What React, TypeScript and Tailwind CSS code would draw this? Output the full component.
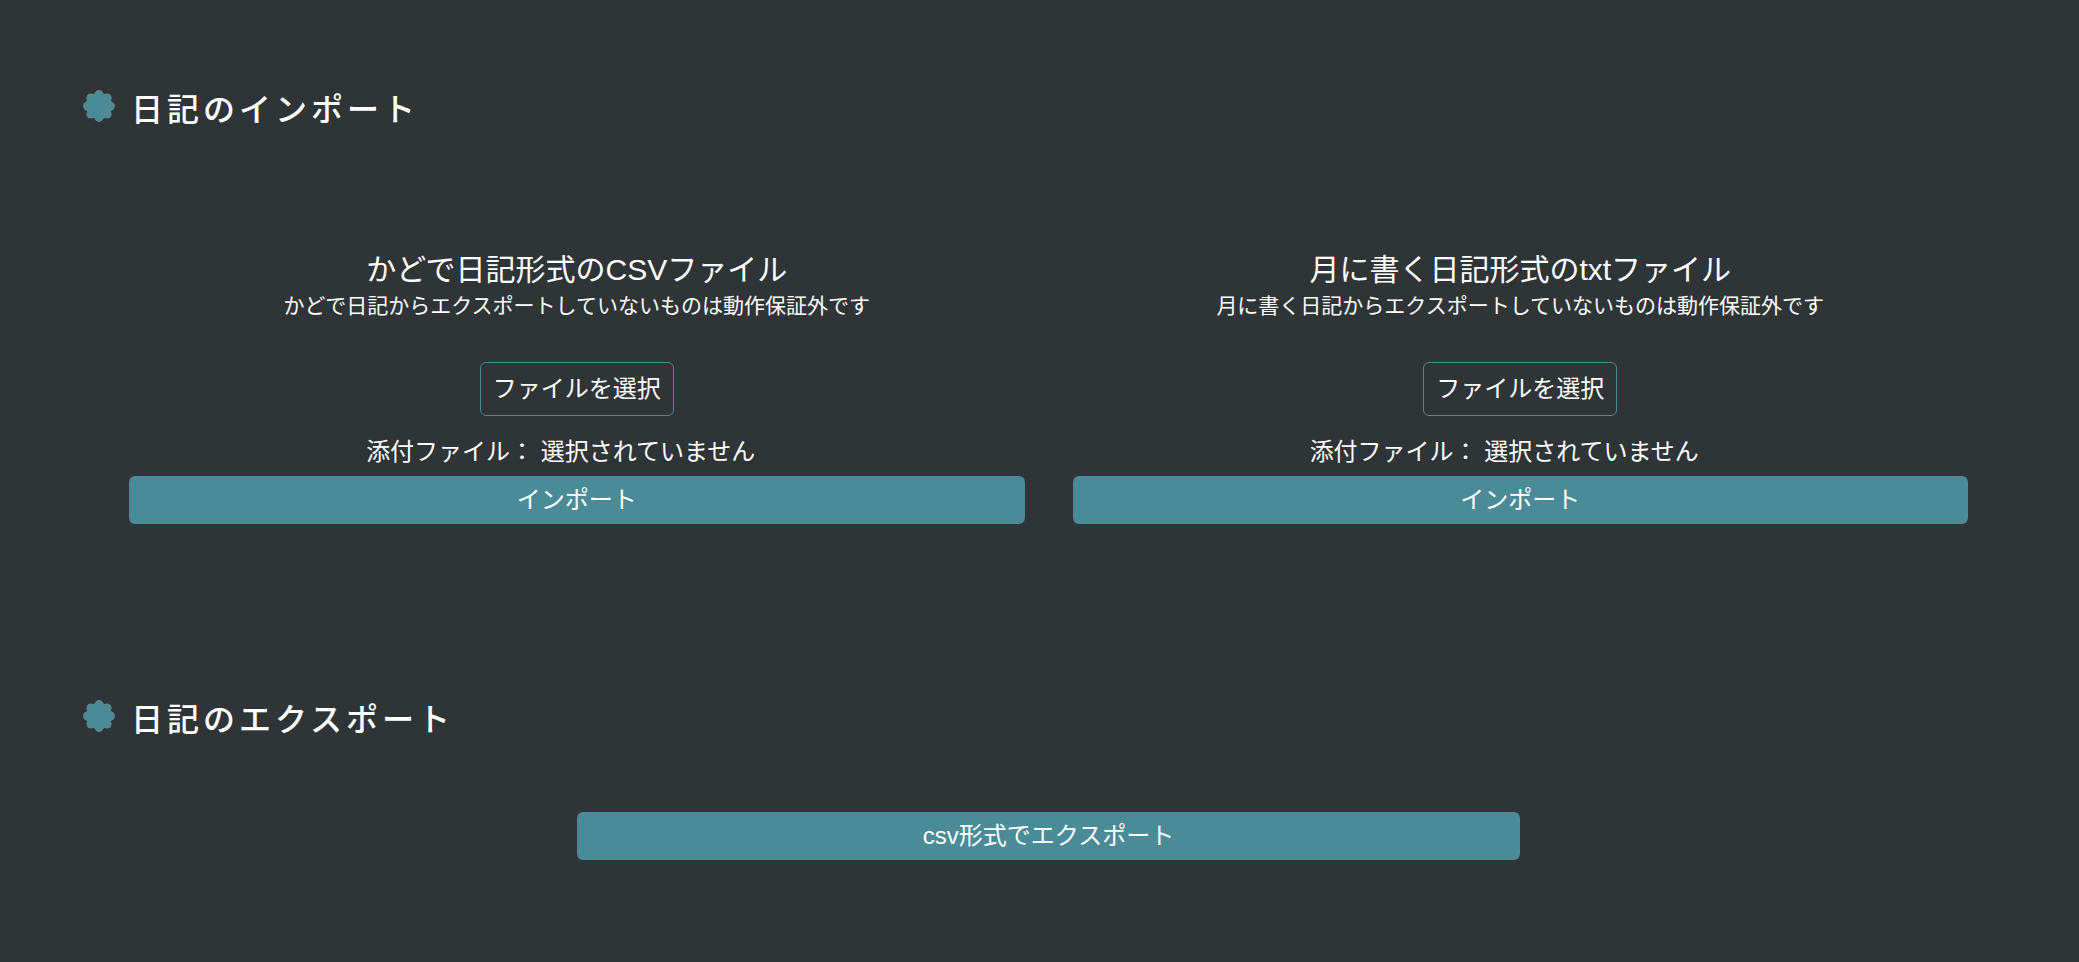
import React from "react";

const petals = [
  [16, 4.6],
  [24.1, 7.9],
  [27.4, 16],
  [24.1, 24.1],
  [16, 27.4],
  [7.9, 24.1],
  [4.6, 16],
  [7.9, 7.9],
];

function Badge() {
  return (
    <svg viewBox="0 0 32 32" className="size-8 shrink-0" aria-hidden="true">
      <g fill="#6d8580">
        {petals.map(([cx, cy]) => (
          <circle key={`${cx}-${cy}`} cx={cx} cy={cy} r="4.5" />
        ))}
        <circle cx="16" cy="16" r="13.2" />
      </g>
      <g fill="#4b8b98">
        {petals.map(([cx, cy]) => (
          <circle key={`${cx}-${cy}`} cx={cx} cy={cy} r="3.7" />
        ))}
        <circle cx="16" cy="16" r="12.4" />
      </g>
    </svg>
  );
}

function Heading({ children }: { children: React.ReactNode }) {
  return (
    <h2 className="flex items-start gap-4 text-[32px] leading-12 font-medium tracking-[4px]">
      <span className="pt-1">
        <Badge />
      </span>
      {children}
    </h2>
  );
}

function ImportForm({ id, title, note }: { id: string; title: string; note: string }) {
  return (
    <form className="flex flex-1 flex-col items-center px-6" onSubmit={(e) => e.preventDefault()}>
      <h3 className="text-[30px] leading-10">{title}</h3>
      <p className="text-[21px] leading-8">{note}</p>
      <label
        htmlFor={id}
        className="mt-10 cursor-pointer rounded-md border border-[#4b8b98] px-3 py-2 text-2xl leading-9"
      >
        ファイルを選択
      </label>
      <input id={id} type="file" className="sr-only" />
      <p className="mt-4 pr-8 text-2xl leading-10">添付ファイル： 選択されていません</p>
      <button type="submit" className="mt-1 h-12 w-full rounded-md bg-[#4b8b98] text-2xl">
        インポート
      </button>
    </form>
  );
}

export default function App() {
  return (
    <main className="min-h-screen bg-[#2f3437] pt-[86px] pr-[65px] pb-20 pl-[83px] font-['Liberation_Sans','Noto_Sans_CJK_JP',sans-serif] text-white">
      <Heading>日記のインポート</Heading>
      <div className="mt-[116px] flex px-[22px]">
        <ImportForm
          id="csv"
          title="かどで日記形式のCSVファイル"
          note="かどで日記からエクスポートしていないものは動作保証外です"
        />
        <ImportForm
          id="txt"
          title="月に書く日記形式のtxtファイル"
          note="月に書く日記からエクスポートしていないものは動作保証外です"
        />
      </div>
      <div className="mt-[172px]">
        <Heading>日記のエクスポート</Heading>
      </div>
      <div className="mt-[68px] px-[22px]">
        <button type="button" className="mx-auto block h-12 w-1/2 rounded-md bg-[#4b8b98] text-2xl">
          csv形式でエクスポート
        </button>
      </div>
    </main>
  );
}
